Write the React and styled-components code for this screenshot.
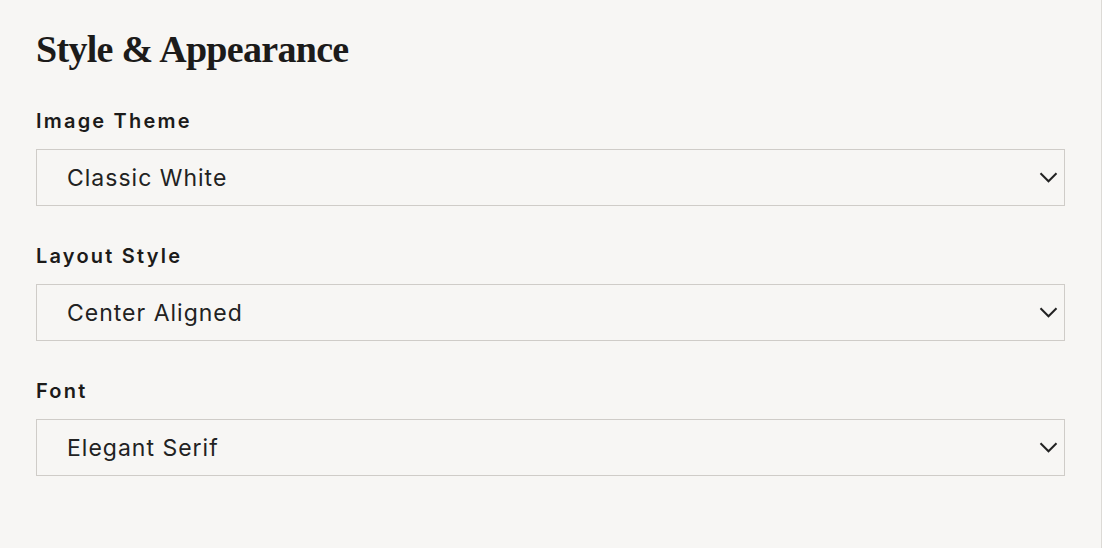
import React from "react";
import styled, { createGlobalStyle } from "styled-components";

const fields = [
  { label: "Image Theme", value: "Classic White" },
  { label: "Layout Style", value: "Center Aligned" },
  { label: "Font", value: "Elegant Serif" },
];

const Chevron = () => (
  <svg width="19" height="11" viewBox="0 0 19 11" fill="none" aria-hidden="true">
    <path d="M1.5 1.2 L9.5 9.3 L17.5 1.2" stroke="#222" strokeWidth="2" />
  </svg>
);

const App = () => (
  <>
    <GlobalStyle />
    <Panel>
      <Title>Style &amp; Appearance</Title>
      {fields.map((f) => (
        <Field key={f.label}>
          <Label>{f.label}</Label>
          <Select>
            <SelectValue>{f.value}</SelectValue>
            <Chevron />
          </Select>
        </Field>
      ))}
    </Panel>
  </>
);

export default App;

const GlobalStyle = createGlobalStyle`
  html, body {
    margin: 0;
    background: #f7f6f4;
  }
  * { box-sizing: border-box; }
`;

const Panel = styled.div`
  width: 1102px;
  height: 548px;
  background: #f7f6f4;
  border-right: 1px solid #dcdad6;
  padding: 26px 36px 0 36px;
  display: flex;
  flex-direction: column;
`;

const Title = styled.h2`
  font-family: "Liberation Serif", "DejaVu Serif", serif;
  font-weight: 700;
  font-size: 38px;
  letter-spacing: -0.7px;
  line-height: 46px;
  color: #1c1b1a;
  margin: 0 0 37px;
`;

const Field = styled.div`
  display: flex;
  flex-direction: column;
  margin-bottom: 38px;
`;

const Label = styled.label`
  font-family: Inter, "Noto Sans", sans-serif;
  font-weight: 600;
  font-size: 20px;
  line-height: 24px;
  letter-spacing: 2.2px;
  color: #1c1b1a;
  margin-bottom: 16px;
`;

const Select = styled.div`
  height: 57px;
  border: 1px solid #cfccc8;
  background: #f7f6f4;
  display: flex;
  align-items: center;
  justify-content: space-between;
  padding: 0 6px 0 30px;
`;

const SelectValue = styled.span`
  font-family: Inter, "Noto Sans", sans-serif;
  font-weight: 400;
  font-size: 23px;
  letter-spacing: 1px;
  color: #222;
`;
